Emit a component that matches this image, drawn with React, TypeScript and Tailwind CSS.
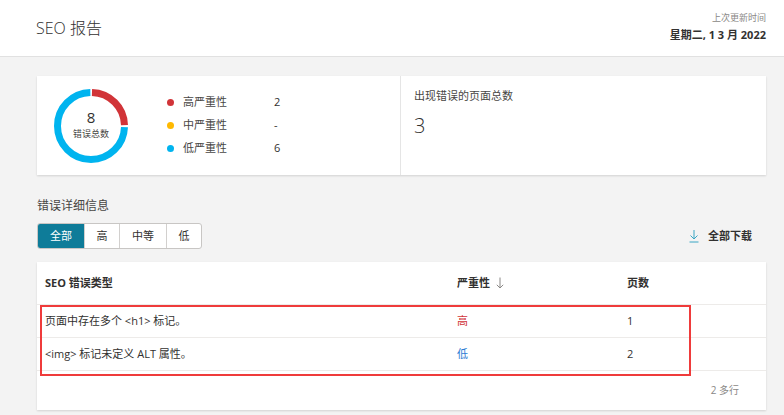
import React from 'react';

const font = { fontFamily: '"Open Sans", "Noto Sans CJK SC", sans-serif' };

const legend = [
  { label: '高严重性', value: '2', dot: 'bg-[#d13438]' },
  { label: '中严重性', value: '-', dot: 'bg-[#ffb900]' },
  { label: '低严重性', value: '6', dot: 'bg-[#00b4ef]' },
];

const rows = [
  { type: '页面中存在多个 <h1> 标记。', level: '高', color: 'text-[#d13438]', pages: '1' },
  { type: '<img> 标记未定义 ALT 属性。', level: '低', color: 'text-[#2b7cd3]', pages: '2' },
];

const tabs = [
  { label: '全部', w: 'w-[46px]', active: true },
  { label: '高', w: 'w-[35px]' },
  { label: '中等', w: 'w-[47px]' },
  { label: '低', w: 'w-[35px]' },
];

const Donut = () => (
  <svg width="74" height="74" viewBox="0 0 74 74">
    <g transform="rotate(-90 37 37)">
      <circle cx="37" cy="37" r="33.5" fill="none" stroke="#d13438" strokeWidth="7" strokeDasharray="50.6 300" strokeDashoffset="-1" />
      <circle cx="37" cy="37" r="33.5" fill="none" stroke="#00b4ef" strokeWidth="7" strokeDasharray="155.9 300" strokeDashoffset="-53.6" />
    </g>
  </svg>
);

export default function App() {
  return (
    <div className="w-[784px] h-[415px] overflow-hidden bg-[#f3f3f3] text-[#323130]" style={font}>
      {/* header */}
      <div className="h-[57px] bg-white border-b border-[#e1e1e1] flex items-center justify-between pl-[36px] pr-[18px]">
        <h1 className="text-[16px] font-light text-[#323130]">SEO 报告</h1>
        <div className="text-right">
          <p className="text-[9px] leading-[12px] text-[#8a8886] mt-[-3px]">上次更新时间</p>
          <p className="text-[11px] leading-[14px] font-bold mt-[4px]">星期二, 1 3 月 2022</p>
        </div>
      </div>

      <div className="pl-[37px] pr-[18px] pt-[19px]">
        {/* summary card */}
        <div className="h-[99px] bg-white flex shadow-[0_1px_2px_rgba(0,0,0,0.14)]">
          <div className="w-[364px] border-r border-[#e5e5e5] flex items-center pl-[17px]">
            <div className="relative w-[74px] h-[74px]">
              <Donut />
              <div className="absolute inset-0 flex flex-col items-center justify-center">
                <span className="text-[15px] leading-[16px] mt-[-2px]">8</span>
                <span className="text-[9px] leading-[12px] mt-[3px] text-[#484644]">错误总数</span>
              </div>
            </div>
            <div className="ml-[39px] flex flex-col gap-[9px]">
              {legend.map((l) => (
                <div key={l.label} className="flex items-center h-[14px] text-[11px]">
                  <span className={`w-[7px] h-[7px] rounded-full ${l.dot}`} />
                  <span className="ml-[9px] w-[91px] text-[#484644]">{l.label}</span>
                  <span>{l.value}</span>
                </div>
              ))}
            </div>
          </div>
          <div className="pl-[13px] pt-[12px]">
            <p className="text-[11px] leading-[16px] text-[#484644]">出现错误的页面总数</p>
            <p className="text-[20px] leading-[28px] font-light mt-[8px]">3</p>
          </div>
        </div>

        {/* details */}
        <p className="mt-[22px] text-[12px] leading-[18px] text-[#484644]">错误详细信息</p>
        <div className="mt-[8px] flex items-center justify-between">
          <div className="flex h-[26px] rounded-[3px] border border-[#c8c6c4] bg-white overflow-hidden">
            {tabs.map((t, i) => (
              <div
                key={t.label}
                className={`${t.w} flex items-center justify-center text-[11px] ${i > 0 ? 'border-l border-[#d2d0ce]' : ''} ${t.active ? 'bg-[#0e7c99] text-white' : 'text-[#323130]'}`}
              >
                {t.label}
              </div>
            ))}
          </div>
          <div className="flex items-center pr-[14px] gap-[9px]">
            <svg width="10" height="14" viewBox="0 0 10 14" fill="none" stroke="#3aa6c4" strokeWidth="1">
              <path d="M5 1v9M1.5 6.5 5 10l3.5-3.5M0.5 13h9" />
            </svg>
            <span className="text-[11px] font-bold">全部下载</span>
          </div>
        </div>

        {/* table */}
        <div className="relative mt-[13px] h-[148px] bg-white shadow-[0_1px_2px_rgba(0,0,0,0.14)] text-[11px]">
          <div className="grid grid-cols-[412px_170px_1fr] pl-[8px] h-[43px] items-center font-bold border-b border-[#edebe9]">
            <span>SEO 错误类型</span>
            <span className="flex items-center gap-[6px]">
              严重性
              <svg width="8" height="12" viewBox="0 0 8 12" fill="none" stroke="#8a8886" strokeWidth="1">
                <path d="M4 0.5v10.5M0.8 7.8 4 11l3.2-3.2" />
              </svg>
            </span>
            <span>页数</span>
          </div>
          {rows.map((r) => (
            <div key={r.type} className="grid grid-cols-[412px_170px_1fr] pl-[8px] h-[33px] items-center border-b border-[#edebe9]">
              <span className="text-[#323130]">{r.type}</span>
              <span className={r.color}>{r.level}</span>
              <span>{r.pages}</span>
            </div>
          ))}
          <div className="flex justify-end pr-[27px] h-[38px] items-center text-[10px] text-[#8a8886]">2 多行</div>
          <div className="absolute left-[3px] top-[43px] w-[651px] h-[71px] border-2 border-[#ef3b3b]" />
        </div>
      </div>
    </div>
  );
}
